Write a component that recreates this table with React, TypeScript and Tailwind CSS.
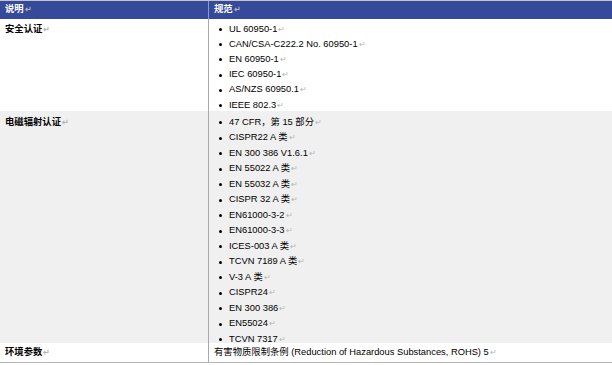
import React from "react";

const font = {
  fontFamily: '"Liberation Sans", Arial, "Noto Sans CJK SC", sans-serif',
};

function Mark() {
  return <span className="text-[8px] text-[#b4b4b4] ml-[1px]">↵</span>;
}

function Item({ children, h }: { children: React.ReactNode; h: string }) {
  return (
    <li className={`flex items-center ${h}`}>
      <span className="w-[3px] h-[3px] rounded-full bg-black ml-[10px] mr-[7px] shrink-0" />
      <span>
        {children}
        <Mark />
      </span>
    </li>
  );
}

const safety = [
  "UL 60950-1",
  "CAN/CSA-C222.2 No. 60950-1",
  "EN 60950-1",
  "IEC 60950-1",
  "AS/NZS 60950.1",
  "IEEE 802.3",
];

const emc = [
  "47 CFR，第 15 部分",
  "CISPR22 A 类",
  "EN 300 386 V1.6.1",
  "EN 55022 A 类",
  "EN 55032 A 类",
  "CISPR 32 A 类",
  "EN61000-3-2",
  "EN61000-3-3",
  "ICES-003 A 类",
  "TCVN 7189 A 类",
  "V-3 A 类",
  "CISPR24",
  "EN 300 386",
  "EN55024",
  "TCVN 7317",
];

export default function App() {
  return (
    <div
      className="w-[612px] h-[365px] bg-white text-[9.33px] text-black overflow-hidden"
      style={font}
    >
      <div className="border-t border-[#c4c4c4]">
        {/* header */}
        <div className="grid grid-cols-[208px_1px_1fr] h-[18px] bg-[#364a9c] text-white font-bold">
          <div className="pl-[5px] flex items-center">
            说明
            <Mark />
          </div>
          <div className="bg-[#8e9ac8]" />
          <div className="pl-[5px] flex items-center">
            规范
            <Mark />
          </div>
        </div>

        {/* safety */}
        <div className="grid grid-cols-[208px_1px_1fr] h-[92px] bg-white">
          <div className="pl-[5px] pt-[3px] font-bold leading-[15px]">
            安全认证
            <Mark />
          </div>
          <div className="bg-[#a8a8a8]" />
          <ul className="pt-[3px]">
            {safety.map((s) => (
              <Item key={s} h="h-[15.2px]">
                {s}
              </Item>
            ))}
          </ul>
        </div>

        {/* emc */}
        <div className="grid grid-cols-[208px_1px_1fr] h-[232px] bg-[#f0f0f0]">
          <div className="pl-[5px] pt-[4px] font-bold leading-[15px]">
            电磁辐射认证
            <Mark />
          </div>
          <div className="bg-[#a8a8a8]" />
          <ul className="pt-[3.75px]">
            {emc.map((s) => (
              <Item key={s} h="h-[15.5px]">
                {s}
              </Item>
            ))}
          </ul>
        </div>

        {/* environment */}
        <div className="grid grid-cols-[208px_1px_1fr] h-[20px] bg-white border-b border-[#b4b4b4]">
          <div className="pl-[5px] flex items-center font-bold">
            环境参数
            <Mark />
          </div>
          <div className="bg-[#a8a8a8]" />
          <div className="pl-[5px] flex items-center">
            有害物质限制条例 (Reduction of Hazardous Substances, ROHS) 5
            <Mark />
          </div>
        </div>
      </div>
    </div>
  );
}
